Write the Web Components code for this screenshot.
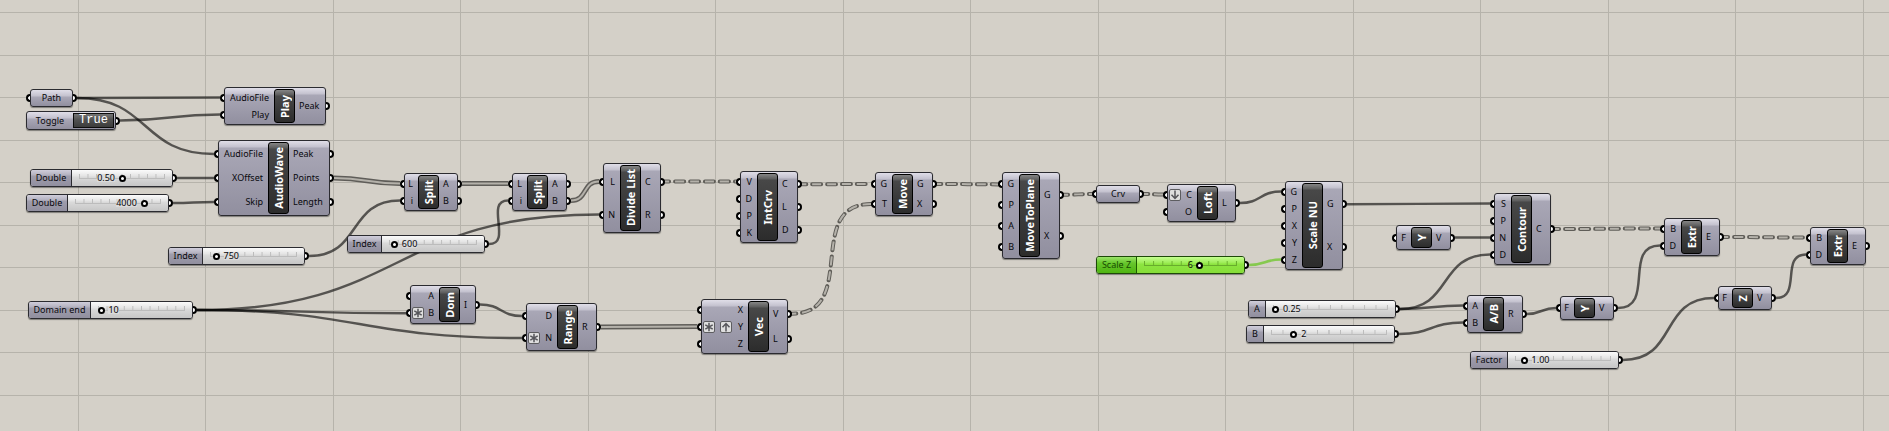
<!DOCTYPE html>
<html lang="en">
<head>
<meta charset="utf-8">
<title>Audio wave definition</title>
<style>
  html, body { margin: 0; }
  body { min-height: 100vh; display: flex; background: #d4d0c8; font-family: "Noto Sans", "Open Sans", sans-serif; }
  flow-canvas { flex: 1; }
</style>
</head>
<body>
<flow-canvas>
  <flow-param id="path" x="30" y="89" w="43" label="Path"></flow-param>
  <flow-toggle id="toggle" x="26" y="111" label="Toggle" value="True"></flow-toggle>
  <flow-node id="play" x="224" y="87" w="102" h="38" in="49" name="Play" inputs="AudioFile,Play" outputs="Peak"></flow-node>
  <flow-node id="wave" x="218" y="140" w="112" h="76" in="49" name="AudioWave" inputs="AudioFile,XOffset,Skip" outputs="Peak,Points,Length"></flow-node>
  <flow-slider id="xoff" x="30" y="169" w="143" cap="41" label="Double" min="0" max="1" step="0.01" value="0.50" text="0.50" side="left"></flow-slider>
  <flow-slider id="skip" x="26" y="194" w="143" cap="41" label="Double" min="0" max="5000" step="1" value="4000" text="4000" side="left"></flow-slider>
  <flow-slider id="idx1" x="168" y="247" w="137" cap="34" label="Index" min="0" max="10000" step="1" value="750" text="750"></flow-slider>
  <flow-slider id="domend" x="28" y="301" w="165" cap="62" label="Domain end" min="0" max="250" step="1" value="10" text="10"></flow-slider>
  <flow-slider id="idx2" x="347" y="235" w="138" cap="34" label="Index" min="0" max="9000" step="1" value="600" text="600"></flow-slider>
  <flow-node id="split1" x="404" y="173" w="54" h="38" in="13" name="Split" inputs="L,i" outputs="A,B"></flow-node>
  <flow-node id="split2" x="512" y="173" w="55" h="38" in="14" name="Split" inputs="L,i" outputs="A,B"></flow-node>
  <flow-node id="divide" x="603" y="163" w="58" h="70" in="16" name="Divide List" inputs="L,N" outputs="C,R"></flow-node>
  <flow-node id="dom" x="410" y="285" w="66" h="39" in="28" name="Dom" inputs="A,B*" outputs="I"></flow-node>
  <flow-node id="range" x="526" y="303" w="71" h="48" in="30" name="Range" inputs="D,N*" outputs="R"></flow-node>
  <flow-node id="vec" x="701" y="299" w="87" h="55" in="46" name="Vec" inputs="X,Y*^,Z" outputs="V,L"></flow-node>
  <flow-node id="int" x="740" y="171" w="58" h="72" in="16" name="IntCrv" inputs="V,D,P,K" outputs="C,L,D"></flow-node>
  <flow-node id="move" x="875" y="172" w="58" h="44" in="16" name="Move" inputs="G,T" outputs="G,X"></flow-node>
  <flow-node id="mtp" x="1002" y="172" w="58" h="87" in="16" name="MoveToPlane" inputs="G,P,A,B" outputs="G,X"></flow-node>
  <flow-param id="crv" x="1096" y="185" w="44" label="Crv"></flow-param>
  <flow-node id="loft" x="1167" y="184" w="69" h="38" in="29" name="Loft" inputs="Cv,O" outputs="L"></flow-node>
  <flow-node id="scale" x="1285" y="181" w="58" h="89" in="16" name="Scale NU" inputs="G,P,X,Y,Z" outputs="G,X"></flow-node>
  <flow-slider id="scalez" tone="green" x="1096" y="256" w="149" cap="40" label="Scale Z" min="0" max="10" step="1" value="6" text="6" side="left"></flow-slider>
  <flow-node id="y1" x="1396" y="225" w="55" h="25" in="14" name="Y" inputs="F" outputs="V"></flow-node>
  <flow-node id="contour" x="1494" y="193" w="57" h="72" in="16" name="Contour" inputs="S,P,N,D" outputs="C"></flow-node>
  <flow-slider id="a" x="1248" y="300" w="148" cap="17" label="A" min="0" max="10" step="0.01" value="0.25" text="0.25"></flow-slider>
  <flow-slider id="b" x="1246" y="325" w="149" cap="17" label="B" min="0" max="10" step="1" value="2" text="2"></flow-slider>
  <flow-node id="div" x="1467" y="295" w="56" h="38" in="15" name="A/B" inputs="A,B" outputs="R"></flow-node>
  <flow-node id="y2" x="1560" y="296" w="54" h="24" in="13" name="Y" inputs="F" outputs="V"></flow-node>
  <flow-slider id="factor" x="1470" y="351" w="149" cap="37" label="Factor" min="0" max="10" step="0.01" value="1.00" text="1.00"></flow-slider>
  <flow-node id="extr1" x="1664" y="218" w="56" h="38" in="16" name="Extr" inputs="B,D" outputs="E"></flow-node>
  <flow-node id="z" x="1718" y="286" w="54" h="24" in="13" name="Z" inputs="F" outputs="V"></flow-node>
  <flow-node id="extr2" x="1810" y="227" w="56" h="38" in="16" name="Extr" inputs="B,D" outputs="E"></flow-node>
</flow-canvas>

<script>
const SHARED = `
  :host { display: block; position: absolute; box-sizing: border-box; font-size: 9px; line-height: 12px; color: #08080c; }
  .body { box-sizing: border-box; height: 100%; display: flex; border: 1px solid #2b2b30; border-radius: 3px; box-shadow: 0 1px 1px rgba(0,0,0,.4);
    background: linear-gradient(#e0dee8 0, #c3c1ce 6px, #a9a7b6 7px, #918f9f 100%); }
  .grip { position: absolute; top: 50%; width: 2px; height: 4px; margin-top: -4px; background: #fff; border: 2px solid #000; }
  .grip.in { left: -4px; border-right: 0; border-radius: 4px 0 0 4px; }
  .grip.out { right: -4px; border-left: 0; border-radius: 0 4px 4px 0; }
`;

class FlowItem extends HTMLElement {
  connectedCallback() {
    this.style.left = this.getAttribute('x') + 'px';
    this.style.top = this.getAttribute('y') + 'px';
    if (this.hasAttribute('w')) this.style.width = this.getAttribute('w') + 'px';
    if (this.hasAttribute('h')) this.style.height = this.getAttribute('h') + 'px';
    this.attachShadow({ mode: 'open' }).innerHTML = `<style>${SHARED}${this.css()}</style>${this.markup()}`;
    this.ready();
  }
  css() { return ''; }
  ready() {}
  grip(side, i) { return this.shadowRoot.querySelectorAll('.grip.' + side)[i].getBoundingClientRect(); }
}

const BADGES = {
  '*': '<path d="M5 .8v8.400M1.300 2.900l7.400 4.200M8.700 2.900l-7.400 4.200"/>',
  '^': '<path d="M5 9.500V1.500M1.500 5.200L5 1.500L8.500 5.200"/>',
  'v': '<path d="M5 .5V8.500M1.500 4.800L5 8.500L8.500 4.800"/>'
};

customElements.define('flow-node', class extends FlowItem {
  css() { return `
    .body { padding: 1px 0; }
    .col { display: flex; flex-direction: column; min-width: 0; }
    .ins { width: ${this.getAttribute('in')}px; flex: none; }
    .outs { flex: 1; }
    .port { flex: 1; display: flex; align-items: center; position: relative; }
    .ins .port { justify-content: flex-end; padding-right: 5px; margin-left: -1px; }
    .outs .port { padding-left: 4px; margin-right: -1px; }
    .badges { display: flex; gap: 5px; margin-right: auto; padding-left: 2px; }
    .badges svg { flex: none; width: 10px; height: 10px; border: 1px solid #5d5d60; border-radius: 2px; background: #dedede; fill: none; stroke: #55555a; stroke-width: 1.500; }
    .plate { flex: none; box-sizing: border-box; width: 21px; display: flex; align-items: center; justify-content: center; border: 1px solid #000; border-radius: 3px;
      background: linear-gradient(#858585 0, #5c5c5c 5px, #484848 6px, #2c2c2c 100%); color: #fff; }
    .plate span { writing-mode: vertical-rl; transform: rotate(180deg); font-size: 11px; font-weight: 700; line-height: 16px; white-space: nowrap; }
  `; }
  markup() {
    const list = k => this.getAttribute(k).split(',');
    const ins = list('inputs').map(t => {
      const name = t.replace(/[*^v]/g, '');
      const marks = [...t.slice(name.length)].map(c => `<svg viewBox="0 0 10 10">${BADGES[c]}</svg>`).join('');
      return `<div class="port"><i class="grip in"></i>${marks ? `<div class="badges">${marks}</div>` : ''}<span>${name}</span></div>`;
    }).join('');
    const outs = list('outputs').map(t => `<div class="port"><span>${t}</span><i class="grip out"></i></div>`).join('');
    return `<div class="body"><div class="col ins">${ins}</div><div class="plate"><span>${this.getAttribute('name')}</span></div><div class="col outs">${outs}</div></div>`;
  }
});

customElements.define('flow-param', class extends FlowItem {
  css() { return `.body { height: 18px; align-items: center; justify-content: center; }`; }
  markup() { return `<div class="body"><i class="grip in"></i><span>${this.getAttribute('label')}</span><i class="grip out"></i></div>`; }
});

customElements.define('flow-toggle', class extends FlowItem {
  css() { return `
    .body { height: 19px; align-items: stretch; }
    label { width: 46px; display: flex; align-items: center; justify-content: center; }
    button { width: 41px; margin: 1px 1px 1px 0; padding: 0 0 2px; border: 1px solid #0c0c0c; background: linear-gradient(#777 0, #505050 6px, #3c3c3c 100%); color: #fff;
      font: 12px/12px "Liberation Mono", monospace; }
  `; }
  markup() { return `<div class="body"><label for="t">${this.getAttribute('label')}</label><button id="t" type="button" aria-pressed="true">${this.getAttribute('value')}</button><i class="grip out"></i></div>`; }
  ready() {
    const b = this.shadowRoot.querySelector('button');
    b.onclick = () => { const on = b.textContent !== 'True'; b.textContent = on ? 'True' : 'False'; b.setAttribute('aria-pressed', on); };
  }
});

customElements.define('flow-slider', class extends FlowItem {
  css() { return `
    .body { height: 18px; background: none; }
    label { box-sizing: border-box; width: ${this.getAttribute('cap')}px; flex: none; display: flex; align-items: center; justify-content: center; border-right: 1px solid #2b2b30;
      border-radius: 2px 0 0 2px; white-space: nowrap; background: linear-gradient(#d0cedb 0, #b3b1bf 5px, #9f9dac 6px, #918f9f 100%); }
    .rail { --tick: #bcbcbc; --face: #dadada; flex: 1; padding: 0 7px; border-radius: 0 2px 2px 0; background: linear-gradient(#fbfbfb 0, #e4e4e4 6px, #dadada 7px, #c6c6c6 100%); }
    .track { position: relative; height: 100%; display: grid; align-items: center; }
    .track > * { grid-area: 1 / 1; }
    .ticks { width: 100%; height: 5px; align-self: start; margin-top: 4px; box-sizing: border-box; border-bottom: 1px solid var(--tick);
      background: linear-gradient(90deg, var(--tick) 1px, transparent 1px) 0 0 / calc((100% - 1px) / 2) 100%,
        linear-gradient(90deg, var(--tick) 1px, transparent 1px) 0 2px / calc((100% - 1px) / 10) 100%; }
    input { appearance: none; -webkit-appearance: none; width: calc(100% + 8px); height: 8px; margin: 0 -4px; background: none; }
    input::-webkit-slider-thumb { -webkit-appearance: none; width: 7px; height: 7px; box-sizing: border-box; border: 2px solid #000; border-radius: 50%; background: #fff; }
    output { position: absolute; top: 2px; left: calc(var(--at) + 7px); background: linear-gradient(var(--face), var(--face)) 0 2px / 100% 8px no-repeat; }
    :host([side=left]) output { left: auto; right: calc(100% - var(--at) + 7px); }
    :host([tone=green]) label { background: linear-gradient(#9be46a 0, #66c62c 6px, #4fb412 100%); border-color: #1d5a00; color: #174a00; }
    :host([tone=green]) .rail { --tick: #68ad2c; --face: #8de541; background: linear-gradient(#c4ff90 0, #9cec55 6px, #8de541 7px, #86dd38 100%); }
    :host([tone=green]) .body { border-color: #1d4a08; }
  `; }
  markup() {
    const g = k => this.getAttribute(k);
    return `<div class="body"><label for="s">${g('label')}</label><div class="rail"><div class="track"><div class="ticks"></div><output for="s">${g('text')}</output><input id="s" type="range" min="${g('min')}" max="${g('max')}" step="${g('step')}" value="${g('value')}"></div></div><i class="grip out"></i></div>`;
  }
  ready() {
    const input = this.shadowRoot.querySelector('input'), out = this.shadowRoot.querySelector('output');
    const digits = (this.getAttribute('step').split('.')[1] || '').length;
    const place = () => this.style.setProperty('--at', 100 * (input.value - input.min) / (input.max - input.min) + '%');
    input.oninput = () => { out.textContent = Number(input.value).toFixed(digits); place(); };
    place();
  }
});

/* Each wire: source item, output index, target item, input index, kind (line | list | tree | green) */
const WIRES = [
  ['path', 0, 'play', 0], ['path', 0, 'wave', 0], ['toggle', 0, 'play', 1], ['xoff', 0, 'wave', 1], ['skip', 0, 'wave', 2],
  ['wave', 1, 'split1', 0, 'list'], ['idx1', 0, 'split1', 1], ['split1', 0, 'split2', 0, 'list'], ['idx2', 0, 'split2', 1],
  ['split2', 1, 'divide', 0, 'list'], ['domend', 0, 'divide', 1], ['domend', 0, 'dom', 1], ['domend', 0, 'range', 1],
  ['dom', 0, 'range', 0], ['range', 0, 'vec', 1, 'list'], ['divide', 0, 'int', 0, 'tree'], ['vec', 0, 'move', 1, 'tree'],
  ['int', 0, 'move', 0, 'tree'], ['move', 0, 'mtp', 0, 'tree'], ['mtp', 0, 'crv', 0, 'tree'], ['crv', 0, 'loft', 0, 'tree'],
  ['loft', 0, 'scale', 0], ['scalez', 0, 'scale', 4, 'green'], ['scale', 0, 'contour', 0], ['y1', 0, 'contour', 2],
  ['a', 0, 'contour', 3], ['a', 0, 'div', 0], ['b', 0, 'div', 1], ['div', 0, 'y2', 0], ['y2', 0, 'extr1', 1],
  ['contour', 0, 'extr1', 0, 'tree'], ['extr1', 0, 'extr2', 0, 'tree'], ['factor', 0, 'z', 0], ['z', 0, 'extr2', 1]
];

customElements.define('flow-canvas', class extends HTMLElement {
  connectedCallback() {
    this.attachShadow({ mode: 'open' }).innerHTML = `<style>
      :host { display: block; position: relative; overflow: hidden; --grid: #b6b3ab; background:
        linear-gradient(90deg, var(--grid) 1px, transparent 1px) 78px 0 / 255px 100%,
        linear-gradient(90deg, var(--grid) 1px, transparent 1px) 205px 0 / 255px 100%,
        linear-gradient(var(--grid) 1px, transparent 1px) 0 12px / 100% 85px,
        linear-gradient(var(--grid) 1px, transparent 1px) 0 55px / 100% 85px, #d4d0c8; }
      .wires { position: absolute; inset: 0; width: 100%; height: 100%; fill: none; }
      .line { stroke: rgba(0,0,0,.6); stroke-width: 2.500; }
      .green { stroke: #86c950; stroke-width: 2.500; }
      .list { stroke: #5f5d59; stroke-width: 5; }
      .tree { stroke: #5f5d58; stroke-width: 3; stroke-linecap: round; stroke-dasharray: 9 6; stroke-dashoffset: 5; stroke-width: 4; }
      .core { stroke: #b4b1aa; stroke-width: 2; }
      .tree + .core { stroke-width: 2; stroke-dasharray: 9 6; stroke-dashoffset: 5; }
    </style><svg class="wires" aria-hidden="true"></svg><slot></slot>`;
    customElements.whenDefined('flow-slider').then(() => this.draw());
  }
  draw() {
    const o = this.getBoundingClientRect();
    this.shadowRoot.querySelector('svg').innerHTML = WIRES.map(([from, i, to, j, kind = 'line']) => {
      const s = document.getElementById(from).grip('out', i), t = document.getElementById(to).grip('in', j);
      const x1 = s.right - o.left, y1 = s.top + s.height / 2 - o.top, x2 = t.left - o.left, y2 = t.top + t.height / 2 - o.top;
      const reach = Math.hypot(x2 - x1, y2 - y1) / 2;
      const d = `M${x1} ${y1}C${x1 + reach} ${y1} ${x2 - reach} ${y2} ${x2} ${y2}`;
      return `<path class="${kind}" d="${d}"/>` + (kind === 'list' || kind === 'tree' ? `<path class="core" d="${d}"/>` : '');
    }).join('');
  }
});
</script>
</body>
</html>
